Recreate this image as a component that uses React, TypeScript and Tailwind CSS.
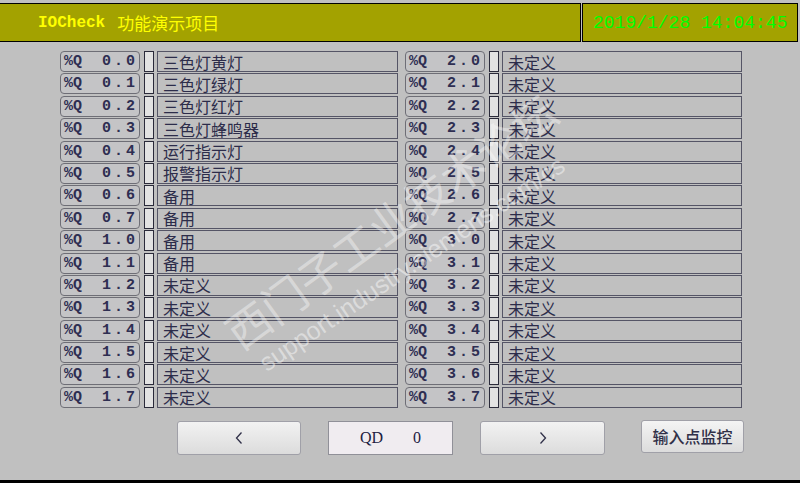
import React from "react";

const left: [string, string][] = [
  ["0.0", "三色灯黄灯"],
  ["0.1", "三色灯绿灯"],
  ["0.2", "三色灯红灯"],
  ["0.3", "三色灯蜂鸣器"],
  ["0.4", "运行指示灯"],
  ["0.5", "报警指示灯"],
  ["0.6", "备用"],
  ["0.7", "备用"],
  ["1.0", "备用"],
  ["1.1", "备用"],
  ["1.2", "未定义"],
  ["1.3", "未定义"],
  ["1.4", "未定义"],
  ["1.5", "未定义"],
  ["1.6", "未定义"],
  ["1.7", "未定义"],
];

const right: [string, string][] = [
  "2.0", "2.1", "2.2", "2.3", "2.4", "2.5", "2.6", "2.7",
  "3.0", "3.1", "3.2", "3.3", "3.4", "3.5", "3.6", "3.7",
].map((a) => [a, "未定义"] as [string, string]);

const mono = { fontFamily: '"Liberation Mono", "DejaVu Sans Mono", monospace' };
const cjk = { fontFamily: '"Noto Sans CJK SC", "Noto Sans", sans-serif' };

function Row({ addr, name }: { addr: string; name: string }) {
  return (
    <div className="flex h-[21px] items-stretch">
      <div
        className="flex w-[80px] shrink-0 items-center justify-between rounded-[4px] border border-[#6e6e76] bg-[#c4c4c6] pl-[3px] pr-[1px] text-[15px] font-bold leading-none text-[#2e2e52]"
        style={mono}
      >
        <span>%Q</span>
        <span className="tracking-[3px]">{addr}</span>
      </div>
      <div className="ml-[4px] w-[10px] shrink-0 border border-[#2a2a3a] bg-[#e2e2e2]" />
      <div
        className="ml-[3px] flex flex-1 items-center border border-[#555566] pl-[5px] text-[16px] leading-none text-[#2c2c4a]"
        style={cjk}
      >
        {name}
      </div>
    </div>
  );
}

function Chevron({ dir }: { dir: "l" | "r" }) {
  return (
    <svg width="8" height="14" viewBox="0 0 8 14" className="text-[#303048]">
      <polyline
        points={dir === "l" ? "6.5,1.5 1.5,7 6.5,12.5" : "1.5,1.5 6.5,7 1.5,12.5"}
        fill="none"
        stroke="currentColor"
        strokeWidth="1.3"
      />
    </svg>
  );
}

export default function App() {
  return (
    <div className="relative flex h-[483px] w-[800px] flex-col overflow-hidden bg-[#c0c0c0]">
      {/* header */}
      <div className="mt-[3px] flex h-[39px] shrink-0">
        <div className="flex w-[581px] items-center border-y border-r border-black bg-[#a3a200] pl-[38px]">
          <span className="text-[16px] font-bold leading-none text-[#ffff00]" style={mono}>
            IOCheck
          </span>
          <span className="ml-[12px] text-[17px] leading-none text-[#ffff00]" style={cjk}>
            功能演示项目
          </span>
        </div>
        <div className="ml-[1px] flex w-[216px] items-center border border-black bg-[#a3a200] pl-[10px]">
          <span className="text-[18px] leading-none text-[#00ff00]" style={mono}>
            2019/1/28 14:04:45
          </span>
        </div>
      </div>

      {/* rows */}
      <div className="mt-[9px] flex pl-[60px]">
        <div className="flex w-[338px] flex-col gap-[1.4px]">
          {left.map(([a, n]) => (
            <Row key={a} addr={a} name={n} />
          ))}
        </div>
        <div className="ml-[7px] flex w-[337px] flex-col gap-[1.4px]">
          {right.map(([a, n]) => (
            <Row key={a} addr={a} name={n} />
          ))}
        </div>
      </div>

      {/* buttons */}
      <div className="mt-[13px] flex items-start pl-[177px]">
        <div className="flex h-[34px] w-[124px] items-center justify-center rounded-[3px] border border-[#a0a0a8] bg-gradient-to-b from-[#f2f2f2] to-[#dcdcdc]">
          <Chevron dir="l" />
        </div>
        <div
          className="ml-[27px] flex h-[34px] w-[125px] items-center justify-center border border-[#909098] bg-[#f0ecf0] text-[16px] text-[#202040]"
          style={{ fontFamily: '"Liberation Serif", serif' }}
        >
          <span>QD</span>
          <span className="ml-[30px]">0</span>
        </div>
        <div className="ml-[27px] flex h-[34px] w-[125px] items-center justify-center rounded-[3px] border border-[#a0a0a8] bg-gradient-to-b from-[#f2f2f2] to-[#dcdcdc]">
          <Chevron dir="r" />
        </div>
        <div
          className="ml-[36px] -mt-[1px] flex h-[33px] w-[103px] items-center justify-center rounded-[3px] border border-[#a0a0a8] bg-gradient-to-b from-[#f4f4f4] to-[#dcdcdc] text-[16px] font-medium text-[#303048]"
          style={cjk}
        >
          输入点监控
        </div>
      </div>

      <div className="flex-1" />
      <div className="h-[3px] shrink-0 bg-black" />

      {/* watermark */}
      <div className="pointer-events-none absolute inset-0">
        <span
          className="absolute whitespace-nowrap text-[44px] leading-none text-white/40"
          style={{ ...cjk, left: 390, top: 220, transform: "translate(-50%, -50%) rotate(-36deg)" }}
        >
          西门子工业技术论坛
        </span>
        <span
          className="absolute whitespace-nowrap text-[25px] leading-none text-white/45"
          style={{
            fontFamily: '"Liberation Sans", Arial, sans-serif',
            left: 412,
            top: 264,
            transform: "translate(-50%, -50%) rotate(-34deg)",
          }}
        >
          support.industry.siemens.com/cs
        </span>
      </div>
    </div>
  );
}
